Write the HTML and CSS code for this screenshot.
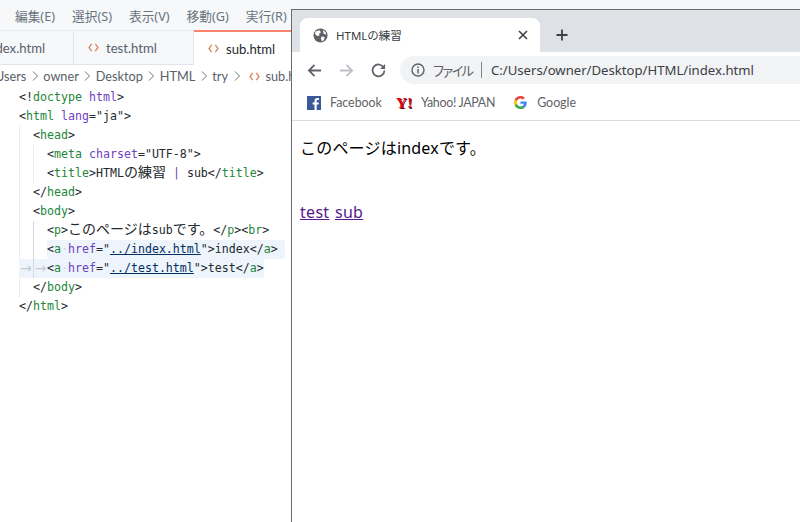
FILE: index.html
```html
<!DOCTYPE html>
<html lang="ja">
<head>
<meta charset="utf-8">
<title>HTMLの練習</title>
<link rel="stylesheet" href="styles.css">
</head>
<body>
<div class="desktop">
  <section class="editor">
    <nav class="menubar">
      <span>編集(E)</span><span>選択(S)</span><span>表示(V)</span><span>移動(G)</span><span>実行(R)</span>
    </nav>
    <div class="tabs">
      <div class="etab first"><span>index.html</span></div>
      <div class="etab second">
        <svg class="code-icon" viewBox="0 0 12 10"><path d="M4 1 L1 5 L4 9 M8 1 L11 5 L8 9"/></svg>
        <span>test.html</span>
      </div>
      <div class="etab active">
        <svg class="code-icon" viewBox="0 0 12 10"><path d="M4 1 L1 5 L4 9 M8 1 L11 5 L8 9"/></svg>
        <span>sub.html</span>
      </div>
    </div>
    <div class="crumbs">
      <span>Users</span><svg class="chev" viewBox="0 0 6 10"><path d="M1 0.5 L5.500 5 L1 9.500"/></svg>
      <span>owner</span><svg class="chev" viewBox="0 0 6 10"><path d="M1 0.5 L5.500 5 L1 9.500"/></svg>
      <span>Desktop</span><svg class="chev" viewBox="0 0 6 10"><path d="M1 0.5 L5.500 5 L1 9.500"/></svg>
      <span>HTML</span><svg class="chev" viewBox="0 0 6 10"><path d="M1 0.5 L5.500 5 L1 9.500"/></svg>
      <span>try</span><svg class="chev" viewBox="0 0 6 10"><path d="M1 0.5 L5.500 5 L1 9.500"/></svg>
      <svg class="code-icon" viewBox="0 0 12 10"><path d="M4 1 L1 5 L4 9 M8 1 L11 5 L8 9"/></svg>
      <span>sub.html</span>
    </div>
    <div class="code">
      <div class="line">&lt;!<b class="g">doctype</b> <b class="p">html</b>&gt;</div>
      <div class="line">&lt;<b class="g">html</b> <b class="p">lang</b>="ja"&gt;</div>
      <div class="block">
        <div class="line">&lt;<b class="g">head</b>&gt;</div>
        <div class="block">
          <div class="line">&lt;<b class="g">meta</b> <b class="p">charset</b>="UTF-8"&gt;</div>
          <div class="line">&lt;<b class="g">title</b>&gt;HTML<span class="ja">の練習</span> <b class="p">|</b> sub&lt;/<b class="g">title</b>&gt;</div>
        </div>
        <div class="line">&lt;/<b class="g">head</b>&gt;</div>
        <div class="line">&lt;<b class="g">body</b>&gt;</div>
        <div class="block current">
          <div class="line">&lt;<b class="g">p</b>&gt;<span class="ja">このページは</span>sub<span class="ja">です。</span>&lt;/<b class="g">p</b>&gt;&lt;<b class="g">br</b>&gt;</div>
          <div class="line hl pad">&lt;<b class="g">a</b><u class="dot">·</u><b class="p">href</b>="<a class="str">../index.html</a>"&gt;index&lt;/<b class="g">a</b>&gt;</div>
          <div class="line hl tabbed"><span class="arrow">→</span><span class="arrow guide">→</span>&lt;<b class="g">a</b><u class="dot">·</u><b class="p">href</b>="<a class="str">../test.html</a>"&gt;test&lt;/<b class="g">a</b>&gt;</div>
        </div>
        <div class="line">&lt;/<b class="g">body</b>&gt;</div>
      </div>
      <div class="line">&lt;/<b class="g">html</b>&gt;</div>
    </div>
  </section>

  <section class="browser">
    <div class="tabstrip">
      <div class="btab">
        <svg class="globe" viewBox="0 0 16 16"><circle cx="8" cy="8" r="7.500" fill="#5f6368"/><path d="M3 3.500 L7 2.500 L8.500 4.500 L6.500 6 L7 8 L4.500 8.500 L2 6 Z M9 9 L12.500 9.500 L11.500 13 L9.500 14 L8.500 11.500 Z M10.500 2 L13.500 4.500 L14 7 L11.500 6.500 Z" fill="#fff"/></svg>
        <span class="btitle">HTMLの練習</span>
        <svg class="close" viewBox="0 0 10 10"><path d="M1 1 L9 9 M9 1 L1 9"/></svg>
      </div>
      <svg class="plus" viewBox="0 0 12 12"><path d="M6 0.500 V11.500 M0.500 6 H11.500"/></svg>
    </div>
    <div class="toolbar">
      <svg class="nav" viewBox="0 0 16 16"><path d="M15 8 H2 M8 2 L2 8 L8 14" stroke="#5f6368"/></svg>
      <svg class="nav" viewBox="0 0 16 16"><path d="M1 8 H14 M8 2 L14 8 L8 14" stroke="#bdc1c6"/></svg>
      <svg class="nav" viewBox="0 0 16 16"><path d="M13.600 5 A6.300 6.300 0 1 0 14.300 8" stroke="#5f6368"/><path d="M15 1 V6.400 H9.600 Z" fill="#5f6368"/></svg>
      <div class="omnibox">
        <svg class="info" viewBox="0 0 14 14"><circle cx="7" cy="7" r="6" fill="none" stroke="#5f6368" stroke-width="1.400"/><path d="M7 6 V10.500 M7 3.400 V4.900" stroke="#5f6368" stroke-width="1.500"/></svg>
        <span class="scheme">ファイル</span>
        <span class="sep"></span>
        <span class="url">C:/Users/owner/Desktop/HTML/index.html</span>
      </div>
    </div>
    <div class="bookmarks">
      <div class="bm"><svg class="fb" viewBox="0 0 14 14"><rect width="14" height="14" fill="#3b5998"/><path d="M9.700 14 V8.600 H11.600 L11.900 6.500 H9.700 V5.200 C9.700 4.500 9.900 4.100 10.900 4.100 H12 V2.200 C11.800 2.200 11.100 2.100 10.300 2.100 C8.600 2.100 7.500 3.100 7.500 5 V6.500 H5.600 V8.600 H7.500 V14 Z" fill="#fff"/></svg><span>Facebook</span></div>
      <div class="bm yahoo"><b class="ylogo">Y!</b><span>Yahoo! JAPAN</span></div>
      <div class="bm google"><svg class="glogo" viewBox="0 0 48 48"><path fill="#EA4335" d="M24 9.500c3.500 0 6.700 1.200 9.200 3.600l6.900-6.900C35.900 2.400 30.500 0 24 0 14.600 0 6.600 5.400 2.600 13.200l8 6.200C12.500 13.700 17.800 9.500 24 9.500z"/><path fill="#4285F4" d="M47 24.500c0-1.600-.1-3.100-.4-4.500H24v9h12.900c-.6 3-2.200 5.500-4.700 7.200l7.700 6c4.500-4.200 7.100-10.300 7.100-17.700z"/><path fill="#FBBC05" d="M10.500 28.600c-.5-1.400-.8-3-.8-4.600s.3-3.200.8-4.600l-8-6.200C.9 16.500 0 20.100 0 24s.9 7.500 2.600 10.800l7.900-6.200z"/><path fill="#34A853" d="M24 48c6.500 0 11.900-2.100 15.900-5.800l-7.700-6c-2.200 1.400-4.900 2.300-8.200 2.300-6.200 0-11.500-4.200-13.400-9.900l-8 6.200C6.600 42.600 14.600 48 24 48z"/></svg><span>Google</span></div>
    </div>
    <main class="page">
      <p class="intro">このページはindexです。</p>
      <div class="links"><a class="visited">test</a> <a class="visited">sub</a></div>
    </main>
  </section>
</div>
</body>
</html>
```
FILE: styles.css
```css
* { box-sizing: border-box; }
html, body { margin: 0; height: 100%; overflow: hidden; }
body { background: #fff; font-family: "Noto Sans", "Noto Sans CJK JP", sans-serif; }
.desktop { display: flex; width: 800px; height: 522px; background: #f6f7f9; }

/* editor */
.editor { width: 291px; flex: none; display: flex; flex-direction: column; background: #fff; overflow: hidden; }
.menubar { height: 30px; flex: none; display: flex; align-items: center; gap: 17px; padding-left: 15px; background: #f6f8fa; color: #6a737d; font-size: 12.700px; white-space: nowrap; }
.tabs { height: 35px; flex: none; display: flex; background: #f6f8fa; border-bottom: 1px solid #e1e4e8; border-top: 1px solid #e8eaed; font-family: Lato, "Noto Sans", sans-serif; font-size: 13.100px; color: #586069; }
.etab { display: flex; align-items: center; gap: 7px; border-right: 1px solid #e1e4e8; overflow: hidden; white-space: nowrap; }
.etab.first { width: 74px; justify-content: flex-end; padding-right: 28px; }
.etab.second { width: 120px; padding-left: 14px; }
.etab.active { flex: 1; padding-left: 14px; background: #fff; color: #24292e; border-right: 0; border-top: 2px solid #f9826c; margin: -1px 0 -1px; }
.code-icon { width: 11px; height: 9px; flex: none; fill: none; stroke: #d9835a; stroke-width: 1.400; }
.crumbs { height: 22px; flex: none; display: flex; align-items: center; gap: 5.500px; margin-left: -5px; font-family: Lato, "Noto Sans", sans-serif; font-size: 12.700px; color: #586069; white-space: nowrap; }
.chev { width: 6px; height: 10px; flex: none; fill: none; stroke: #6a737d; stroke-width: 1; }
.crumbs .code-icon { margin: 0 0 0 4px; }
.code { padding: 1px 0 0 19px; font-family: "DejaVu Sans Mono", "Noto Sans CJK JP", monospace; font-size: 11.620px; line-height: 19px; color: #24292e; white-space: nowrap; }
.code b { font-weight: normal; }
.line { height: 19px; }
.ja { font-family: "Noto Sans CJK JP", sans-serif; font-size: 14px; line-height: 1; }
.block { border-left: 1px solid #eceef0; padding-left: 13px; }
.block.current { border-left-color: #d5d8dc; }
.g { color: #22863a; }
.p { color: #6f42c1; }
.str { color: #032f62; text-decoration: underline; }
.dot { color: #cfd4da; text-decoration: none; }
.hl { width: fit-content; background: #edf4fb; border-radius: 3px; }
.hl.pad { padding-right: 7px; }
.tabbed { margin-left: -28px; position: relative; }
.arrow { color: #c6ccd2; display: inline-block; vertical-align: top; width: 14px; height: 19px; line-height: 19px; text-align: center; font-family: "DejaVu Sans", sans-serif; font-size: 14px; }
.arrow.guide { border-left: 1px solid #d5d8dc; }

/* browser */
.browser { flex: 1; margin-top: 9px; border-left: 1px solid #6b6b6b; border-top: 1px solid #6b6b6b; background: #fff; display: flex; flex-direction: column; z-index: 1; }
.tabstrip { height: 42px; flex: none; display: flex; align-items: flex-end; padding-left: 8px; background: #dee1e6; }
.btab { width: 240px; height: 34px; display: flex; align-items: center; padding: 0 12px 0 13px; background: #fff; border-radius: 8px 8px 0 0; }
.globe { width: 15px; height: 15px; flex: none; }
.btitle { margin-left: 8px; flex: 1; font-size: 11.500px; color: #3c4043; }
.close { width: 10px; height: 10px; fill: none; stroke: #3c4043; stroke-width: 1.600; }
.plus { width: 12px; height: 12px; fill: none; stroke: #3c4043; stroke-width: 1.800; margin: 0 0 11px 16px; }
.toolbar { height: 38px; flex: none; display: flex; align-items: center; padding: 0 0 2px 15px; gap: 17px; background: #fff; }
.nav { width: 15px; height: 15px; fill: none; stroke-width: 1.900; flex: none; }
.nav:nth-child(3) { margin-right: -3px; }
.omnibox { flex: 1; height: 28px; display: flex; align-items: center; padding-left: 11px; background: #f1f3f4; border-radius: 14px 0 0 14px; font-size: 13.150px; color: #3c4043; }
.info { width: 14px; height: 14px; flex: none; }
.scheme { margin-left: 8px; color: #5f6368; width: 40px; white-space: nowrap; font-feature-settings: "palt"; letter-spacing: -1.500px; }
.sep { width: 1px; height: 16px; margin: 0 9px 0 8px; background: #80868b; }
.url { white-space: nowrap; }
.bookmarks { height: 31px; flex: none; display: flex; align-items: center; padding: 0 0 5px 15px; gap: 16px; border-bottom: 1px solid #dadce0; font-family: Lato, "Noto Sans", sans-serif; font-size: 12.400px; color: #5f6368; }
.bm { display: flex; align-items: center; gap: 10px; white-space: nowrap; }
.bm:first-child { gap: 9px; }
.bm.yahoo { margin-left: -2px; letter-spacing: -0.300px; }
.bm.google { margin-left: 3px; gap: 9px; }
.fb { width: 14px; height: 14px; }
.glogo { width: 13px; height: 13px; margin-right: 1px; }
.ylogo { font-family: "Liberation Serif", serif; font-weight: bold; font-size: 15px; line-height: 14px; color: #e60012; text-shadow: 1px 1px 0 #400; width: 15px; letter-spacing: 0.500px; }
.page { flex: 1; padding: 15px 7px 0 8px; color: #000; font-size: 16px; letter-spacing: 0.200px; }
.intro { margin: 0; line-height: 24px; }
.links { margin-top: 40px; line-height: 24px; letter-spacing: 0.300px; word-spacing: 1px; }
.visited { color: #551a8b; text-decoration: underline; }
```
